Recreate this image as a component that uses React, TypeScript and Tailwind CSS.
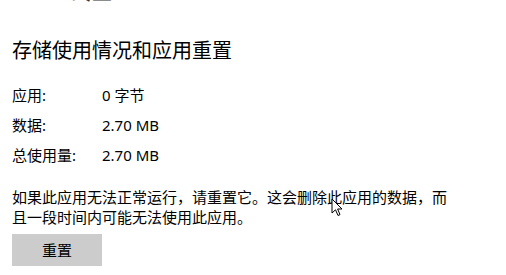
import React from "react";

export default function App() {
  const font = { fontFamily: '"Noto Sans", "Noto Sans CJK SC", sans-serif' };
  return (
    <div
      className="relative w-[506px] h-[275px] overflow-hidden bg-white text-black pl-[12px]"
      style={font}
    >
      <div className="h-[3px] overflow-hidden pl-[60px]">
        <div className="-mt-[17px] text-[20px] leading-[20px] text-[#333]">终止</div>
      </div>
      <div className="mt-[34px] text-[20px] leading-[28px]">存储使用情况和应用重置</div>
      <div className="mt-[15px] text-[15px]">
        <div className="flex h-[30px] items-center">
          <span className="w-[90px]">应用:</span>
          <span>0 字节</span>
        </div>
        <div className="flex h-[30px] items-center">
          <span className="w-[90px]">数据:</span>
          <span>2.70 MB</span>
        </div>
        <div className="flex h-[30px] items-center">
          <span className="w-[90px]">总使用量:</span>
          <span>2.70 MB</span>
        </div>
      </div>
      <p className="mt-[17px] w-[442px] text-[15px] leading-[20px]">
        如果此应用无法正常运行，请重置它。这会删除此应用的数据，而且一段时间内可能无法使用此应用。
      </p>
      <button className="mt-[7px] flex h-[32px] w-[90px] items-center justify-center bg-[#cccccc] text-[15px]">
        重置
      </button>
      <svg
        className="absolute left-[331px] top-[198px]"
        width="13"
        height="19"
        viewBox="0 0 13 19"
      >
        <path
          d="M1 1 L1 15 L4.5 11.8 L7 17.5 L9 16.6 L6.6 11 L11 11 Z"
          fill="white"
          stroke="black"
          strokeWidth="1"
          strokeLinejoin="miter"
        />
      </svg>
    </div>
  );
}
